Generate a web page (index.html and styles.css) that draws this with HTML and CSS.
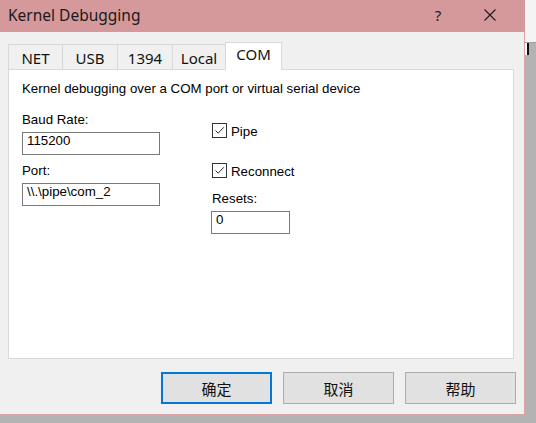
FILE: index.html
```html
<!DOCTYPE html>
<html>
<head>
<meta charset="utf-8">
<link rel="stylesheet" href="styles.css">
</head>
<body>
<div class="backwin"></div>
<div class="backctl"></div>
<div class="dialog">
  <div class="titlebar">
    <span class="title">Kernel Debugging</span>
    <span class="cap-help">?</span>
    <span class="cap-close">
      <svg width="12" height="12" viewBox="0 0 12 12"><path d="M0.5 0.5L11.5 11.5M11.5 0.5L0.5 11.5" stroke="#1a1a1a" stroke-width="1.1" fill="none"/></svg>
    </span>
  </div>
  <div class="content">
    <div class="tabs">
      <div class="tab t-net">NET</div>
      <div class="tab t-usb">USB</div>
      <div class="tab t-1394">1394</div>
      <div class="tab t-local">Local</div>
      <div class="tab t-com selected">COM</div>
    </div>
    <div class="panel">
      <div class="desc">Kernel debugging over a COM port or virtual serial device</div>
      <div class="form">
        <div class="col-left">
          <div class="label">Baud Rate:</div>
          <div class="textbox wide">115200</div>
          <div class="label label-port">Port:</div>
          <div class="textbox wide">\\.\pipe\com_2</div>
        </div>
        <div class="col-right">
          <div class="check check-pipe">
            <span class="box"><svg width="13" height="13" viewBox="0 0 13 13"><path d="M2.5 6.5L5.2 9.2L10.8 3.3" stroke="#222" stroke-width="1" fill="none"/></svg></span>
            <span class="check-label">Pipe</span>
          </div>
          <div class="check check-reconnect">
            <span class="box"><svg width="13" height="13" viewBox="0 0 13 13"><path d="M2.5 6.5L5.2 9.2L10.8 3.3" stroke="#222" stroke-width="1" fill="none"/></svg></span>
            <span class="check-label">Reconnect</span>
          </div>
          <div class="label label-resets">Resets:</div>
          <div class="textbox narrow">0</div>
        </div>
      </div>
    </div>
    <div class="buttons">
      <div class="btn default">确定</div>
      <div class="btn">取消</div>
      <div class="btn">帮助</div>
    </div>
  </div>
</div>
</body>
</html>
```

FILE: styles.css
```css
html, body {
  margin: 0;
  padding: 0;
}
body {
  background: #b3b3b3;
  width: 536px;
  height: 423px;
  overflow: hidden;
  position: relative;
  font-family: "Liberation Sans", Arial, sans-serif;
  color: #000;
}
.backwin {
  position: absolute;
  left: 525px;
  top: 0;
  width: 11px;
  height: 42px;
  background: #f4f4f4;
  border-bottom: 1px solid #a0a0a0;
}
.backctl {
  position: absolute;
  left: 525px;
  top: 43px;
  width: 2px;
  height: 12px;
  background: #fff;
  border-right: 2px solid #111;
}
.dialog {
  position: relative;
  width: 525px;
  height: 415px;
  box-sizing: border-box;
  background: #f0f0f0;
  border-right: 1px solid #dba2a4;
  border-bottom: 1px solid #dba2a4;
  display: flex;
  flex-direction: column;
}
.titlebar {
  height: 32px;
  background: #d6999b;
  display: flex;
  align-items: center;
  padding-left: 8px;
  margin-right: -1px;
  font-family: "Noto Sans", "Open Sans", sans-serif;
  font-size: 15.5px;
  color: #1a1a1a;
  flex: none;
}
.title {
  padding-bottom: 2px;
}
.cap-help {
  margin-left: auto;
  width: 46px;
  text-align: center;
  padding-bottom: 3px;
  font-size: 15px;
}
.cap-close {
  width: 58px;
  margin-right: 6px;
  display: flex;
  justify-content: center;
  padding-bottom: 3px;
}
.content {
  flex: 1;
  display: flex;
  flex-direction: column;
  padding: 10px 0 0 8px;
}
.tabs {
  display: flex;
  align-items: flex-end;
  height: 27px;
  position: relative;
  z-index: 1;
  font-family: "Noto Sans", "Open Sans", sans-serif;
  font-size: 15px;
}
.tab {
  box-sizing: border-box;
  height: 25px;
  border: 1px solid #d9d9d9;
  border-bottom: none;
  background: #f0f0f0;
  margin-left: -1px;
  display: flex;
  justify-content: center;
  align-items: center;
  padding-top: 1px;
  color: #111;
}
.t-net { width: 55px; margin-left: 0; }
.t-usb { width: 56px; }
.t-1394 { width: 56px; }
.t-local { width: 54px; }
.t-com { width: 57px; }
.tab.selected {
  height: 28px;
  background: #fff;
  margin-bottom: -1px;
  align-items: flex-start;
  padding-top: 1px;
}
.panel {
  box-sizing: border-box;
  width: 506px;
  height: 290px;
  background: #fff;
  border: 1px solid #d9d9d9;
  padding: 11px 0 0 13px;
  font-size: 13.3px;
  line-height: 15px;
}
.desc {
  height: 15px;
}
.form {
  display: flex;
  margin-top: 16px;
}
.col-left {
  width: 138px;
  margin-right: 52px;
}
.col-right {
  display: flex;
  flex-direction: column;
}
.label {
  height: 15px;
}
.label-port {
  margin-top: 8px;
}
.textbox {
  box-sizing: border-box;
  height: 23px;
  border: 1px solid #7a7a7a;
  background: #fff;
  padding: 0 4px;
  line-height: 16px;
  margin-top: 5px;
  white-space: nowrap;
}
.wide { width: 138px; }
.narrow { width: 79px; margin-top: 5px; margin-left: -1px; }
.check {
  display: flex;
  align-items: center;
  height: 15px;
}
.check-pipe { margin-top: 11px; }
.check-reconnect { margin-top: 25px; }
.box {
  box-sizing: border-box;
  width: 15px;
  height: 15px;
  border: 1px solid #333;
  background: #fff;
  display: flex;
  align-items: center;
  justify-content: center;
  margin-right: 4px;
}
.box svg { display: block; }
.check-label {
  padding-top: 1px;
}
.label-resets {
  margin-top: 13px;
}
.buttons {
  display: flex;
  justify-content: flex-end;
  gap: 11px;
  margin-top: 13px;
  padding-right: 8px;
}
.btn {
  box-sizing: border-box;
  width: 111px;
  height: 32px;
  background: #e1e1e1;
  border: 1px solid #adadad;
  display: flex;
  align-items: center;
  justify-content: center;
  font-family: "Noto Sans CJK SC", "Noto Sans", sans-serif;
  font-size: 15px;
  color: #111;
}
.btn.default {
  border: 2px solid #0078d7;
}
```
